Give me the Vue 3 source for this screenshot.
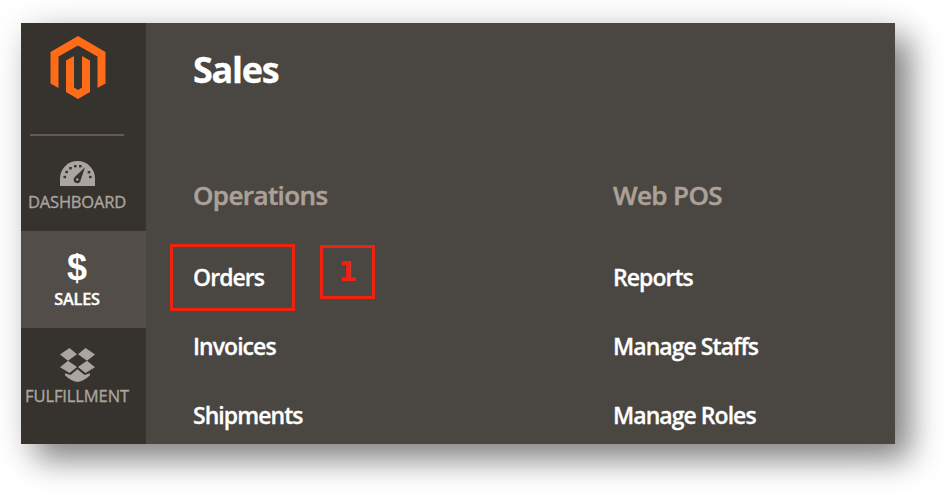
<script setup>
const columns = [
  { title: 'Operations', cls: 'ops', items: ['Orders', 'Invoices', 'Shipments'] },
  { title: 'Web POS', cls: 'pos', items: ['Reports', 'Manage Staffs', 'Manage Roles'] },
]
</script>

<template>
  <div class="page">
    <div class="window">
      <nav class="sidebar">
        <div class="brand">
          <svg class="logo" width="56" height="63" viewBox="0 0 56 63">
            <path fill="#ff6c17" d="M28 0 55.500 16V47.500L47.500 52V20.500L28 9.500 8.500 20.500V52L.5 47.500V16Z" />
            <path fill="#ff6c17" d="M16 24.500 24 20V51.500L28 54 32 51.500V20L40 24.500V56L28 63 16 56Z" />
          </svg>
          <div class="rule"></div>
        </div>
        <a class="item dashboard">
          <svg width="35" height="25" viewBox="0 0 35 25">
            <path fill="#aaa69f" d="M0 25V17.500a17.500 17.500 0 0 1 35 0V25Z" />
            <g fill="#38332e">
              <rect x="3.500" y="14.800" width="2.600" height="2.400" />
              <rect x="5.300" y="9.800" width="2.600" height="2.400" />
              <rect x="9.200" y="6" width="2.600" height="2.400" />
              <rect x="14" y="4" width="2.600" height="2.400" />
              <rect x="19" y="4" width="2.600" height="2.400" />
              <rect x="27.700" y="10" width="2.600" height="2.400" />
              <rect x="29" y="14.800" width="2.600" height="2.400" />
              <path d="M25 6.200 20.800 18.700A3.600 3.600 0 1 1 15 15.800Z" />
            </g>
            <circle cx="17.300" cy="18.500" r="1.200" fill="#aaa69f" />
          </svg>
          <span>DASHBOARD</span>
        </a>
        <a class="item sales">
          <b class="dollar">$</b>
          <span>SALES</span>
        </a>
        <a class="item fulfillment">
          <svg width="35" height="34" viewBox="0 0 35 34">
            <g fill="#aaa69f">
              <path d="M9.500 0 17 6.300 8 12.700 0 6.500Z" />
              <path d="M25.500 0 35 6.500 27 12.700 18 6.300Z" />
              <path d="M8 12.700 17 19 9.500 25 0 19.200Z" />
              <path d="M27 12.700 35 19.200 25.500 25 18 19Z" />
              <path d="M17.500 21.200 24.500 27 30 25.200V27.200Q24 33 17.500 34 11 33 5 27.200V25.200L10.500 27Z" />
            </g>
          </svg>
          <span>FULFILLMENT</span>
        </a>
      </nav>
      <main class="menu">
        <h1>Sales</h1>
        <div class="columns">
          <section v-for="c in columns" :key="c.title" :class="c.cls">
            <h2>{{ c.title }}</h2>
            <ul>
              <li v-for="i in c.items" :key="i">{{ i }}</li>
            </ul>
          </section>
        </div>
        <div class="mark outline"></div>
        <div class="mark step">1</div>
      </main>
    </div>
  </div>
</template>

<style>
body { background: #fff; overflow: hidden; }
</style>

<style scoped>
.page {
  box-sizing: border-box;
  width: 950px;
  height: 499px;
  padding: 23px 0 0 21px;
  overflow: hidden;
  font-family: "Open Sans", "Noto Sans", sans-serif;
}
.window {
  display: flex;
  width: 874px;
  height: 421px;
  background: #4a4641;
  box-shadow: 15px 15px 30px rgba(0, 0, 0, 0.47), 2px 2px 40px rgba(0, 0, 0, 0.08);
}
.sidebar {
  width: 125px;
  background: #36322d;
  color: #aaa69f;
}
.brand { height: 112px; padding: 13px 0 0 29px; box-sizing: border-box; }
.logo { display: block; }
.rule { width: 94px; height: 2px; margin: 35px 0 0 -20px; background: #625a54; }
.item {
  box-sizing: border-box;
  display: flex;
  flex-direction: column;
  align-items: center;
  height: 97px;
  margin-left: -6.500px;
  padding-right: 6.500px;
  font-size: 16.5px;
  line-height: 20px;
  white-space: nowrap;
}
.item > * { flex: none; }
.item span { -webkit-text-stroke: 0.35px currentColor; }
.dashboard { height: 96px; padding-top: 26px; }
.dashboard span { margin-top: 6px; letter-spacing: -0.2px; }
.sales {
  margin-left: 0;
  padding: 18px 13px 0 0;
  background: #524d48;
  color: #fff;
  font-size: 16.3px;
  font-weight: 600;
}
.dollar { font: bold 36px/37px "Liberation Sans", sans-serif; }
.sales span { margin-top: 3px; letter-spacing: -0.2px; }
.fulfillment { padding-top: 20px; }
.fulfillment span { margin-top: 4px; letter-spacing: -0.1px; }
.menu { position: relative; flex: 1; padding: 23px 0 0 47px; }
h1 { margin: 0; color: #fff; font-size: 36px; line-height: 48px; font-weight: 700; letter-spacing: -1.3px; -webkit-text-stroke: 0.3px currentColor; }
.columns { display: grid; grid-template-columns: 420px 1fr; margin-top: 83px; }
h2 { margin: 0 0 48px; color: #aca198; font-size: 26px; line-height: 36px; font-weight: 600; letter-spacing: -0.6px; -webkit-text-stroke: 0.5px currentColor; }
ul { margin: 0; padding: 0; list-style: none; }
li { height: 69px; color: #fff; font-size: 23px; line-height: 32px; font-weight: 600; letter-spacing: -0.95px; -webkit-text-stroke: 0.3px currentColor; }
.mark { position: absolute; box-sizing: border-box; border: 3px solid #ee2211; }
.outline { left: 24px; top: 221px; width: 125px; height: 67px; }
.step {
  left: 174px;
  top: 222px;
  width: 55px;
  height: 54px;
  color: #ee2211;
  font: bold 27px/48px "DejaVu Sans", sans-serif;
  text-align: center;
}
</style>
